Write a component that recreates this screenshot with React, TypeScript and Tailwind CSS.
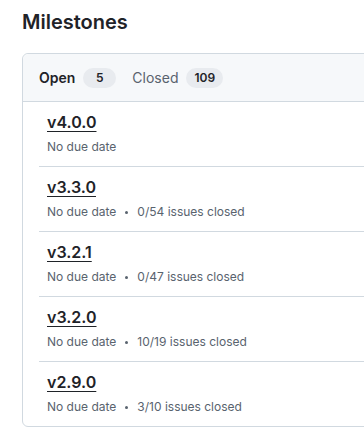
import React from "react";

const milestones = [
  { title: "v4.0.0", progress: null },
  { title: "v3.3.0", progress: "0/54 issues closed" },
  { title: "v3.2.1", progress: "0/47 issues closed" },
  { title: "v3.2.0", progress: "10/19 issues closed" },
  { title: "v2.9.0", progress: "3/10 issues closed" },
];

function Counter({ children }: { children: React.ReactNode }) {
  return (
    <span className="inline-block min-w-[33px] h-[20px] px-2 rounded-full bg-[#e8ebef] text-[12px] leading-[20px] font-semibold text-[#1f2328] text-center">
      {children}
    </span>
  );
}

export default function App() {
  return (
    <div
      className="w-[364px] h-[440px] overflow-hidden bg-white px-[22px] pt-[7px]"
      style={{ fontFamily: "Inter, 'Noto Sans', sans-serif" }}
    >
      <h1 className="text-[20px] leading-[30px] font-semibold text-[#1f2328]">
        Milestones
      </h1>

      <div className="mt-[16px] w-[420px] rounded-[6px] border border-[#d1d9e0]">
        {/* tabs */}
        <div className="h-[48px] flex items-center gap-4 px-4 bg-[#f6f8fa] border-b border-[#d1d9e0] rounded-t-[6px]">
          <div className="flex items-center gap-2">
            <span className="text-[14px] font-semibold text-[#1f2328]">Open</span>
            <Counter>5</Counter>
          </div>
          <div className="flex items-center gap-2">
            <span className="text-[14px] text-[#59636e]">Closed</span>
            <Counter>109</Counter>
          </div>
        </div>

        {/* list */}
        <div className="ml-4">
          {milestones.map((m, i) => (
            <div
              key={m.title}
              className={`h-[64px] box-content pl-2 ${
                i > 0 ? "border-t border-[#d1d9e0]" : ""
              }`}
            >
              <div className="pt-2">
                <a
                  href="#"
                  className="text-[16px] leading-[24px] font-semibold text-[#1f2328] underline underline-offset-[3px] decoration-1"
                >
                  {m.title}
                </a>
              </div>
              <div className="mt-[4px] flex items-center text-[12px] leading-[18px] text-[#59636e]">
                <span>No due date</span>
                {m.progress && (
                  <>
                    <span className="mx-[9px] w-[3px] h-[3px] rounded-full bg-[#59636e]" />
                    <span>{m.progress}</span>
                  </>
                )}
              </div>
            </div>
          ))}
        </div>
      </div>
    </div>
  );
}
